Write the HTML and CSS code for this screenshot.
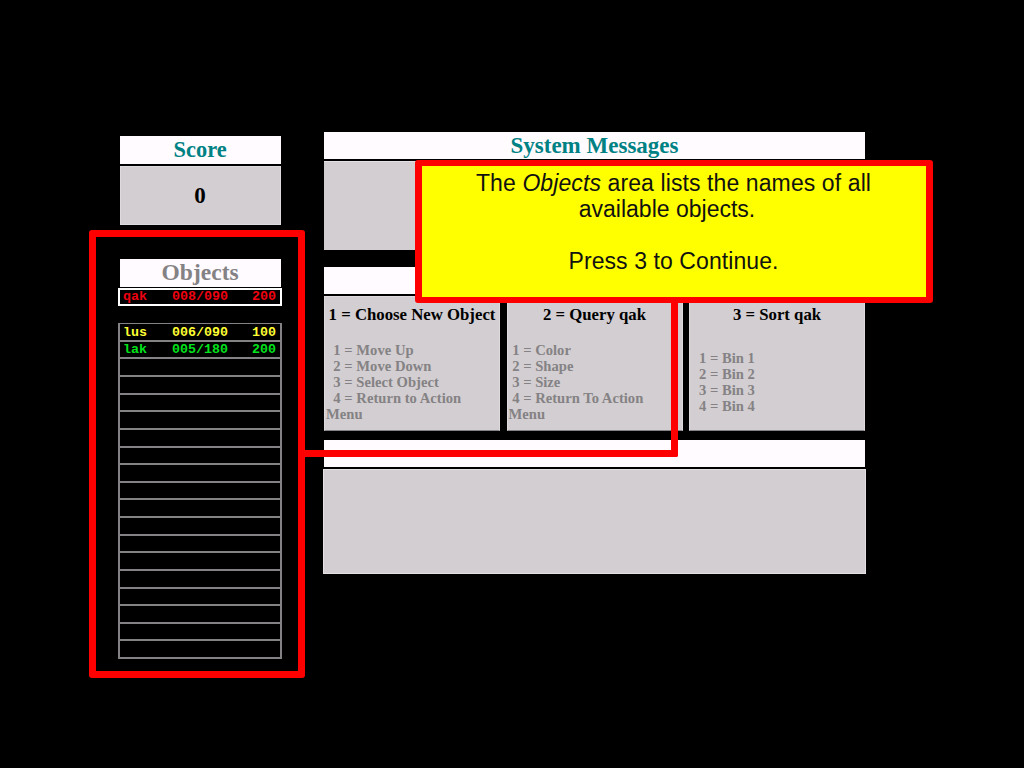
FILE: index.html
```
<!DOCTYPE html>
<html lang="en">
<head>
<meta charset="utf-8">
<title>Objects tutorial</title>
<link rel="stylesheet" href="styles.css">
</head>
<body>
<main class="screen">
  <aside class="sidebar">
    <h2 class="bar score-title"><span>Score</span></h2>
    <div class="score-value">0</div>
    <h2 class="bar objects-title"><span>Objects</span></h2>
    <div class="row selected"><span>qak</span><span>008/090</span><span>200</span></div>
    <div class="list">
      <div class="row yellow"><span>lus</span><span>006/090</span><span>100</span></div>
      <div class="row green"><span>lak</span><span>005/180</span><span>200</span></div>
      <div class="row"></div><div class="row"></div><div class="row"></div><div class="row"></div>
      <div class="row"></div><div class="row"></div><div class="row"></div><div class="row"></div>
      <div class="row"></div><div class="row"></div><div class="row"></div><div class="row"></div>
      <div class="row"></div><div class="row"></div><div class="row"></div><div class="row"></div>
      <div class="row"></div>
    </div>
  </aside>
  <section class="content">
    <h2 class="bar system-title"><span>System Messages</span></h2>
    <div class="messages"></div>
    <div class="bar action-title"></div>
    <div class="actions">
      <section class="action">
        <h3>1 = Choose New Object</h3>
        <p class="options">&nbsp; 1 = Move Up<br>&nbsp; 2 = Move Down<br>&nbsp; 3 = Select Object<br>&nbsp; 4 = Return to Action<br>Menu</p>
      </section>
      <section class="action query">
        <h3>2 = Query qak</h3>
        <p class="options">&nbsp;1 = Color<br>&nbsp;2 = Shape<br>&nbsp;3 = Size<br>&nbsp;4 = Return To Action<br>Menu</p>
      </section>
      <section class="action sort">
        <h3>3 = Sort qak</h3>
        <p class="options">1 = Bin 1<br>2 = Bin 2<br>3 = Bin 3<br>4 = Bin 4</p>
      </section>
    </div>
    <div class="bar result-title"></div>
    <div class="results"></div>
  </section>
  <div class="highlight"></div>
  <div class="connector"></div>
  <div class="callout">
    <p class="wide">The <em>Objects</em> area lists the names of all</p>
    <p class="second">available objects.</p>
    <p class="prompt">Press 3 to Continue.</p>
  </div>
</main>
</body>
</html>
```
FILE: styles.css
```
* { box-sizing: border-box; }
body { margin: 0; background: #000; }
h2, h3, p { margin: 0; }
.screen {
  position: relative;
  width: 1024px;
  height: 768px;
  display: flex;
  gap: 41px;
  padding: 132px 0 0 118px;
  overflow: hidden;
  background: #000;
  font-family: "Liberation Serif", serif;
}
.sidebar { width: 164px; padding-top: 4px; }
.bar {
  height: 27.5px;
  line-height: 27px;
  background: #fffbff;
  color: #008284;
  font-size: 22.4px;
  text-align: center;
  font-weight: bold;
}
.sidebar .bar, .score-value { margin-left: 1.6px; margin-right: 1.4px; }
.score-value {
  margin-top: 2.5px;
  height: 59px;
  background: #d3ced1;
  border: 1px solid #dedade;
  text-align: center;
  font-size: 23px;
  line-height: 58px;
  font-weight: bold;
}
.sidebar .objects-title { margin-top: 34px; color: #848284; font-size: 23.5px; }
.row {
  display: grid;
  grid-template-columns: 49px 80px 1fr;
  align-items: center;
  padding-left: 4px;
  font: bold 13.33px/15px "Liberation Mono", monospace;
}
.row span { display: block; transform: scaleY(.9); }
.selected { height: 18.5px; margin-top: 1.2px; border: 2px solid #fff; padding-left: 3px; color: #f00010; }
.selected span { margin-top: -1px; }
.list { margin-top: 17px; border: 1px solid #848284; border-width: 1px 2px 0; }
.list .row { height: 17.63px; padding-left: 3px; border-bottom: 2px solid #848284; }
.yellow { color: #ff3; }
.green { color: #00e41c; }
.content { width: 543px; }
.content .bar { margin-left: 1px; margin-right: 1px; height: 27px; }
.system-title span { font-size: 23px; }
.messages { height: 89px; margin: 2px 1px 17px; background: #d3ced1; border-top: 1px solid #e4e0e4; }
.actions {
  display: grid;
  grid-template-columns: 176px 176px 176px;
  column-gap: 6.5px;
  margin: 2px 1px 9px;
  height: 135px;
}
.action { background: #d3ced1; border: 1px solid #dedade; border-bottom-color: #858285; }
.action h3 {
  padding-top: 8px;
  line-height: 20px;
  font-size: 16.75px;
  text-align: center;
  white-space: nowrap;
  color: #000;
}
.options {
  margin-top: 17px;
  padding-left: 1px;
  color: #848284;
  font-size: 14.6px;
  letter-spacing: .02px;
  font-weight: bold;
  line-height: 16px;
  white-space: nowrap;
}
.sort .options { margin-top: 25px; padding-left: 9px; }
.results { margin-top: 2px; height: 104.5px; background: #d3ced1; border: 1px solid #e4e0e4; }
.highlight {
  position: absolute;
  left: 89px; top: 230px;
  width: 216px; height: 448px;
  border: 7px solid #f00;
  border-radius: 3px;
}
.connector {
  position: absolute;
  left: 302px; top: 300px;
  width: 375.5px; height: 157px;
  border: solid #f00;
  border-width: 0 7px 7px 0;
  border-radius: 0 0 2px 0;
}
.callout {
  position: absolute;
  left: 414.5px; top: 159.5px;
  width: 518px; height: 143px;
  padding-top: 4px;
  border: solid #f00;
  border-width: 6px 7px 6px;
  border-radius: 3px;
  background: #ff0;
  color: #111;
  font: 23px/26px "Liberation Sans", sans-serif;
  text-align: center;
  white-space: nowrap;
}
.wide { letter-spacing: .1px; }
.second { padding-right: 13px; }
.prompt { margin-top: 26px; letter-spacing: .08px; }
```
